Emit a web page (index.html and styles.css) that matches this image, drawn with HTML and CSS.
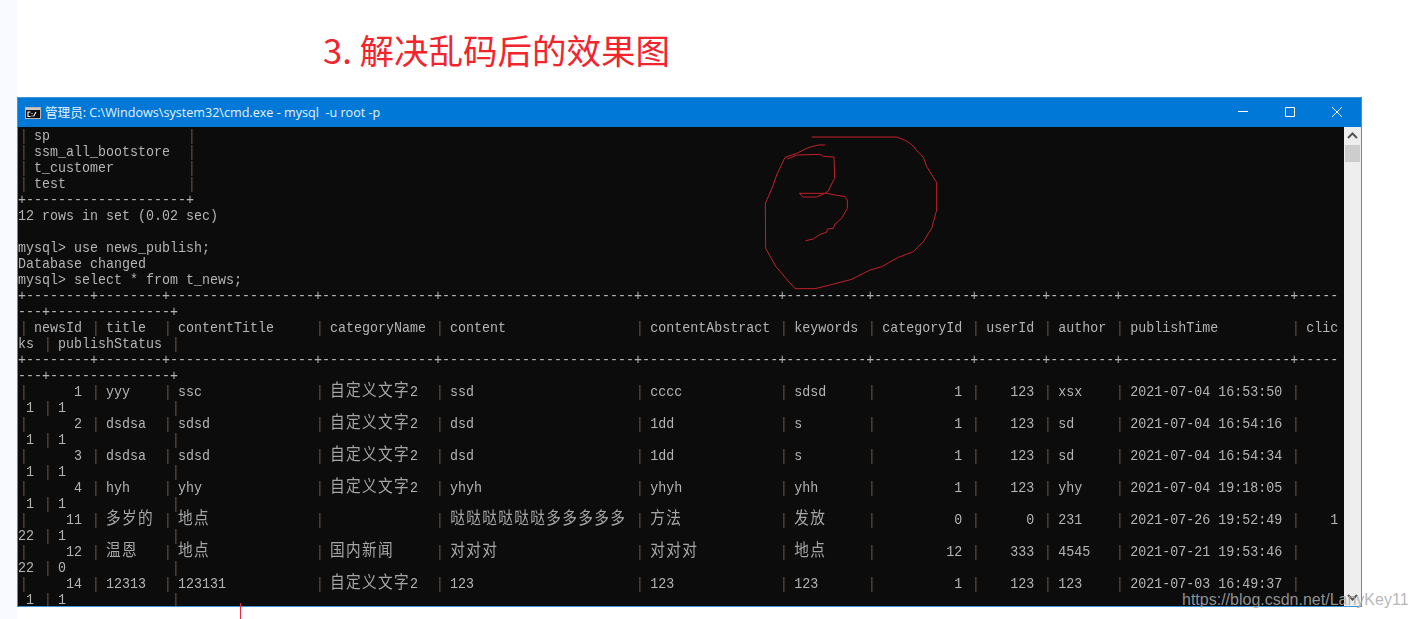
FILE: index.html
```html
<!DOCTYPE html>
<html lang="zh">
<head>
<meta charset="utf-8">
<title>解决乱码后的效果图</title>
<link rel="stylesheet" href="styles.css">
</head>
<body>
<div class="strip"></div>
<main class="article">
<h1 class="heading">3. 解决乱码后的效果图</h1>
<section class="window">
<header class="titlebar">
<svg class="app-icon" viewBox="0 0 16 12"><rect width="16" height="12" fill="#0a0a0a"/><rect x=".5" y=".5" width="15" height="11" fill="none" stroke="#b5b5b5"/><rect x="1" y="1" width="14" height="2" fill="#c8c8c8"/><path d="M5.500 5H3V9.500H5.500M7 6v1M7 8.500v1M8.500 9.500L11 5" fill="none" stroke="#fff" stroke-width="1.100"/></svg>
<span class="title">管理员: C:\Windows\system32\cmd.exe - mysql&nbsp; -u root -p</span>
<div class="controls">
<svg class="ctl" viewBox="0 0 47 29"><path d="M19 13.500h10" stroke="#fff" fill="none"/></svg>
<svg class="ctl" viewBox="0 0 47 29"><path d="M19.500 9.500h9v9h-9z" stroke="#fff" fill="none"/></svg>
<svg class="ctl" viewBox="0 0 47 29"><path d="M19 9l10 10M29 9L19 19" stroke="#fff" fill="none"/></svg>
</div>
</header>
<div class="client">
<div class="console">
<pre class="text"><i class="p">|</i> sp                 <i class="p">|</i>
<i class="p">|</i> ssm_all_bootstore  <i class="p">|</i>
<i class="p">|</i> t_customer         <i class="p">|</i>
<i class="p">|</i> test               <i class="p">|</i>
+--------------------+
12 rows in set (0.02 sec)

mysql&gt; use news_publish;
Database changed
mysql&gt; select * from t_news;
+--------+--------+------------------+--------------+------------------------+-----------------+----------+------------+--------+--------+---------------------+-----
---+---------------+
<i class="p">|</i> newsId <i class="p">|</i> title  <i class="p">|</i> contentTitle     <i class="p">|</i> categoryName <i class="p">|</i> content                <i class="p">|</i> contentAbstract <i class="p">|</i> keywords <i class="p">|</i> categoryId <i class="p">|</i> userId <i class="p">|</i> author <i class="p">|</i> publishTime         <i class="p">|</i> clic
ks <i class="p">|</i> publishStatus <i class="p">|</i>
+--------+--------+------------------+--------------+------------------------+-----------------+----------+------------+--------+--------+---------------------+-----
---+---------------+
<i class="p">|</i>      1 <i class="p">|</i> yyy    <i class="p">|</i> ssc              <i class="p">|</i> <b class="c">自定义文字</b>2  <i class="p">|</i> ssd                    <i class="p">|</i> cccc            <i class="p">|</i> sdsd     <i class="p">|</i>          1 <i class="p">|</i>    123 <i class="p">|</i> xsx    <i class="p">|</i> 2021-07-04 16:53:50 <i class="p">|</i>
 1 <i class="p">|</i> 1             <i class="p">|</i>
<i class="p">|</i>      2 <i class="p">|</i> dsdsa  <i class="p">|</i> sdsd             <i class="p">|</i> <b class="c">自定义文字</b>2  <i class="p">|</i> dsd                    <i class="p">|</i> 1dd             <i class="p">|</i> s        <i class="p">|</i>          1 <i class="p">|</i>    123 <i class="p">|</i> sd     <i class="p">|</i> 2021-07-04 16:54:16 <i class="p">|</i>
 1 <i class="p">|</i> 1             <i class="p">|</i>
<i class="p">|</i>      3 <i class="p">|</i> dsdsa  <i class="p">|</i> sdsd             <i class="p">|</i> <b class="c">自定义文字</b>2  <i class="p">|</i> dsd                    <i class="p">|</i> 1dd             <i class="p">|</i> s        <i class="p">|</i>          1 <i class="p">|</i>    123 <i class="p">|</i> sd     <i class="p">|</i> 2021-07-04 16:54:34 <i class="p">|</i>
 1 <i class="p">|</i> 1             <i class="p">|</i>
<i class="p">|</i>      4 <i class="p">|</i> hyh    <i class="p">|</i> yhy              <i class="p">|</i> <b class="c">自定义文字</b>2  <i class="p">|</i> yhyh                   <i class="p">|</i> yhyh            <i class="p">|</i> yhh      <i class="p">|</i>          1 <i class="p">|</i>    123 <i class="p">|</i> yhy    <i class="p">|</i> 2021-07-04 19:18:05 <i class="p">|</i>
 1 <i class="p">|</i> 1             <i class="p">|</i>
<i class="p">|</i>     11 <i class="p">|</i> <b class="c">多岁的</b> <i class="p">|</i> <b class="c">地点</b>             <i class="p">|</i>              <i class="p">|</i> <b class="c">哒哒哒哒哒哒多多多多多</b> <i class="p">|</i> <b class="c">方法</b>            <i class="p">|</i> <b class="c">发放</b>     <i class="p">|</i>          0 <i class="p">|</i>      0 <i class="p">|</i> 231    <i class="p">|</i> 2021-07-26 19:52:49 <i class="p">|</i>    1
22 <i class="p">|</i> 1             <i class="p">|</i>
<i class="p">|</i>     12 <i class="p">|</i> <b class="c">温恩</b>   <i class="p">|</i> <b class="c">地点</b>             <i class="p">|</i> <b class="c">国内新闻</b>     <i class="p">|</i> <b class="c">对对对</b>                 <i class="p">|</i> <b class="c">对对对</b>          <i class="p">|</i> <b class="c">地点</b>     <i class="p">|</i>         12 <i class="p">|</i>    333 <i class="p">|</i> 4545   <i class="p">|</i> 2021-07-21 19:53:46 <i class="p">|</i>
22 <i class="p">|</i> 0             <i class="p">|</i>
<i class="p">|</i>     14 <i class="p">|</i> 12313  <i class="p">|</i> 123131           <i class="p">|</i> <b class="c">自定义文字</b>2  <i class="p">|</i> 123                    <i class="p">|</i> 123             <i class="p">|</i> 123      <i class="p">|</i>          1 <i class="p">|</i>    123 <i class="p">|</i> 123    <i class="p">|</i> 2021-07-03 16:49:37 <i class="p">|</i>
 1 <i class="p">|</i> 1             <i class="p">|</i></pre>
</div>
<div class="scrollbar">
<svg class="arrow" viewBox="0 0 17 18"><path d="M4 11l4.500-4.500L13 11" fill="none" stroke="#555" stroke-width="2"/></svg>
<div class="thumb"></div>
<div class="track"></div>
<svg class="arrow" viewBox="0 0 17 18"><path d="M4 7l4.500 4.500L13 7" fill="none" stroke="#555" stroke-width="2"/></svg>
</div>
</div>
<svg class="scribble" viewBox="0 0 600 525">
<path d="M185 36H440L470 48 492 65 497 73 520 97 530 125 555 165 560 172V255L545 310 520 350 490 380 445 397 395 425 360 435 305 463 240 480 195 491H135L112 465 78 425 47 370 46 235 68 185 80 150 105 97 140 85 175 68 205 60H225"/>
<path d="M112 102L140 90 210 88 220 94 252 96 254 160 243 180 235 198 225 205 200 216H160L148 205H230L255 210 285 215 292 225V250L275 280 255 297 250 310 232 312 230 322 210 328 190 342 167 347"/>
</svg>
</section>
<div class="tick"></div>
<span class="watermark">https://blog.csdn.net/LanyKey11</span>
</main>
</body>
</html>
```
FILE: styles.css
```css
html, body {
  margin: 0;
  height: 100%;
  overflow: hidden;
  background: #fff;
}
body {
  display: flex;
  height: 619px;
}
.strip {
  width: 17px;
  flex: none;
  background: #f8faff;
}
.article {
  flex: 1;
  position: relative;
  display: flex;
  flex-direction: column;
}
.heading {
  margin: 0;
  height: 97px;
  box-sizing: border-box;
  padding: 25px 0 0 306px;
  color: #f2242c;
  font: 400 34.500px/48px "Noto Sans CJK SC", "Noto Sans", sans-serif;
  white-space: nowrap;
}
.window {
  position: relative;
  width: 1345px;
  height: 510px;
  box-sizing: border-box;
  border: 1px solid #3f94d8;
  display: flex;
  flex-direction: column;
}
.titlebar {
  height: 29px;
  flex: none;
  background: #0078d7;
  display: flex;
  align-items: center;
  padding-left: 7px;
  color: #e8f2fb;
}
.app-icon {
  width: 16px;
  height: 12px;
  flex: none;
  margin-right: 4px;
}
.title {
  font: 12.600px/16px "Open Sans", "Noto Sans CJK SC", sans-serif;
  white-space: nowrap;
}
.controls {
  margin-left: auto;
  display: flex;
  margin-right: 1px;
}
.ctl {
  display: block;
  width: 47px;
  height: 29px;
}
.client {
  flex: 1;
  min-height: 0;
  display: flex;
  background: #0c0c0c;
}
.console {
  flex: 1;
  min-width: 0;
  overflow: hidden;
  filter: blur(.35px);
}
.text {
  width: 112.500%;
  margin: 0;
  padding: 2px 0 0;
  color: #b4b4b4;
  font: 15px/16px "Liberation Mono", "Noto Sans CJK SC", monospace;
  transform: scaleX(.8889);
  transform-origin: 0 0;
}
.p {
  display: inline-block;
  width: 9px;
  height: 16px;
  vertical-align: top;
  font-style: normal;
  color: transparent;
  background: linear-gradient(90deg, #74502f 50%, #2f2822 50%) 5.600px 0 / 2.250px 15px no-repeat;
}
.c {
  color: #a6a6a6;
  font: 400 16.500px/0 "Noto Sans CJK SC", sans-serif;
  letter-spacing: 1.500px;
}
.scrollbar {
  width: 17px;
  flex: none;
  background: #eee;
  display: flex;
  flex-direction: column;
}
.arrow {
  display: block;
  width: 17px;
  height: 18px;
  flex: none;
}
.thumb {
  height: 17px;
  flex: none;
  margin: 0 1px;
  background: #cdcdcd;
}
.track {
  flex: 1;
}
.scribble {
  position: absolute;
  left: 732px;
  top: 27px;
  width: 200px;
  height: 175px;
  fill: none;
  stroke: #c2202a;
  stroke-width: 3;
  stroke-linejoin: round;
}
.tick {
  position: absolute;
  left: 223px;
  top: 603px;
  width: 1px;
  height: 16px;
  background: #e8283a;
}
.watermark {
  position: absolute;
  left: 1165px;
  top: 590px;
  color: rgba(170, 170, 170, .85);
  font: 16px/20px "Liberation Sans", sans-serif;
  white-space: nowrap;
}
```
